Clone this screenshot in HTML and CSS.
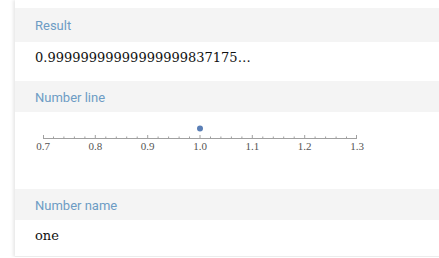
FILE: index.html
```html
<!DOCTYPE html>
<html lang="en">
<head>
  <meta charset="UTF-8" />
  <meta name="viewport" content="width=device-width, initial-scale=1.0" />
  <title>Result</title>
  <link rel="stylesheet" href="styles.css">
</head>
<body>
  <div class="results">
    <div class="pod-tail"></div>

    <section class="pod">
      <h2 class="pod-title pod-title-first">Result</h2>
      <div class="pod-body">0.99999999999999999837175…</div>
    </section>

    <section class="pod">
      <h2 class="pod-title">Number line</h2>
      <div class="pod-body pod-plot">
        <svg class="numline" width="340" height="77" viewBox="0 0 340 77">
          <circle cx="165" cy="16.5" r="3" fill="#5b7fb6" />
          <line x1="8" y1="26.5" x2="322" y2="26.5" stroke="#a0a0a0" stroke-width="1" />
          <path stroke="#a0a0a0" stroke-width="1" fill="none"
            d="M8.5 23v3 M18.5 24.5v2 M28.9 24.5v2 M39.4 24.5v2 M49.9 24.5v2
               M60.3 23v3 M70.8 24.5v2 M81.3 24.5v2 M91.7 24.5v2 M102.2 24.5v2
               M112.7 23v3 M123.1 24.5v2 M133.6 24.5v2 M144.1 24.5v2 M154.5 24.5v2
               M165 23v3 M175.5 24.5v2 M185.9 24.5v2 M196.4 24.5v2 M206.9 24.5v2
               M217.3 23v3 M227.8 24.5v2 M238.3 24.5v2 M248.7 24.5v2 M259.2 24.5v2
               M269.7 23v3 M280.1 24.5v2 M290.6 24.5v2 M301.1 24.5v2 M311.5 24.5v2
               M321.5 23v3" />
          <g class="ticklabels">
            <text x="8" y="38">0.7</text>
            <text x="60.3" y="38">0.8</text>
            <text x="112.7" y="38">0.9</text>
            <text x="165" y="38">1.0</text>
            <text x="217.3" y="38">1.1</text>
            <text x="269.7" y="38">1.2</text>
            <text x="322" y="38">1.3</text>
          </g>
        </svg>
      </div>
    </section>

    <section class="pod">
      <h2 class="pod-title">Number name</h2>
      <div class="pod-body pod-last">one</div>
    </section>
  </div>
</body>
</html>
```

FILE: styles.css
```css
/* Reset and base styles */
* {
  box-sizing: border-box;
  margin: 0;
  padding: 0;
}
body {
  background-color: #fff;
  color: #111;
  font-family: "DejaVu Serif", serif;
}

/* Results column */
.results {
  margin-left: 15px;
  box-shadow: -2px 0 3px rgba(0,0,0,0.09);
  border-bottom: 1px solid #ececec;
}
.pod-tail {
  height: 8px;
  background: #fff;
}

/* Pod header */
.pod-title {
  background: #f4f4f4;
  color: #6d9cc4;
  font-family: Roboto, "Noto Sans", sans-serif;
  font-size: 13px;
  font-weight: 400;
  line-height: 15px;
  padding: 9px 20px 7px;
}
.pod-title-first {
  padding-top: 10px;
  padding-bottom: 9px;
}

/* Pod content */
.pod-body {
  background: #fff;
  font-size: 13px;
  line-height: 16px;
  padding: 8px 20px 15px;
}
.pod-plot {
  padding: 0 20px;
  height: 77px;
}
.pod-last {
  padding-bottom: 12px;
}

.numline {
  display: block;
}
.ticklabels text {
  font-family: "Liberation Serif", serif;
  font-size: 11px;
  fill: #555;
  text-anchor: middle;
}
```
